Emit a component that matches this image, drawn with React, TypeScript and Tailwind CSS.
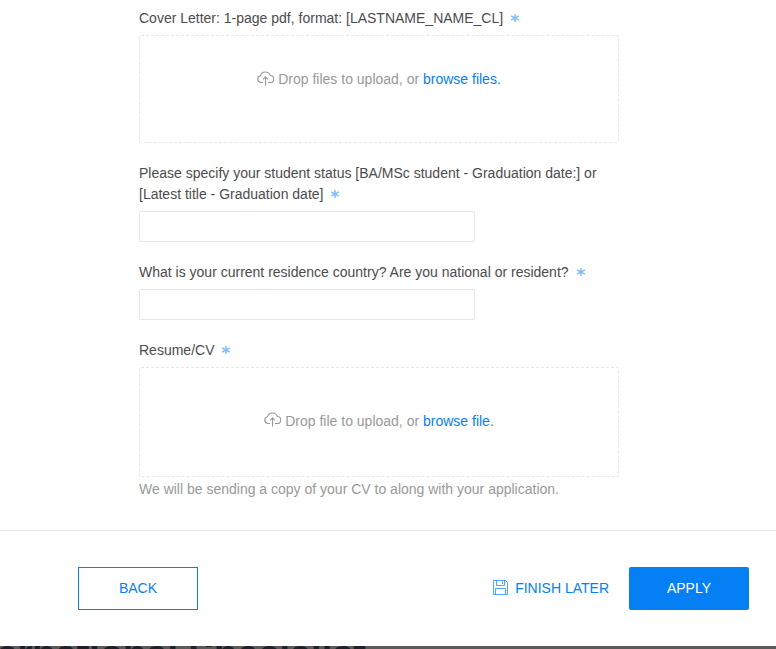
import { useState } from 'react';
import type { ReactNode } from 'react';

function UploadIcon() {
  return (
    <svg width="17" height="16" viewBox="0 0 17 16" fill="none" stroke="#999999" strokeWidth="1.1" className="mr-1 mb-1 shrink-0">
      <path d="M6 12.5H4A3.4 3.4 0 0 1 3.4 5.8A5.2 5.2 0 0 1 13.3 5.5A3.5 3.5 0 0 1 13.2 12.5H11" />
      <path d="M8.5 15.5V7M6 9.3L8.5 6.8L11 9.3" />
    </svg>
  );
}

function SaveIcon() {
  return (
    <svg width="15" height="15" viewBox="0 0 15 15" fill="none" stroke="#0580f4" strokeWidth="0.7" className="mr-[7px]">
      <path d="M0.5 0.5H12.5L14.5 2.5V14.5H0.5Z" />
      <path d="M3.5 0.5V5.5H11.5V0.5M9.5 1.5V4" />
      <path d="M2.5 14.5V8.5H12.5V14.5" />
    </svg>
  );
}

function Label({ children }: { children: ReactNode }) {
  return (
    <label className="block text-sm leading-[21px] text-[#4c4c4c]">
      {children}
      <svg width="8" height="9" viewBox="0 0 8 9" stroke="#82bffa" strokeWidth="1.5" className="ml-2 inline-block align-[0px]">
        <path d="M4 0V8M0.2 1.9L7.8 6.1M7.8 1.9L0.2 6.1" />
      </svg>
    </label>
  );
}

export default function App() {
  const [status, setStatus] = useState('');
  const [country, setCountry] = useState('');

  return (
    <div className="h-[649px] overflow-hidden bg-white font-['Liberation_Sans',Arial,sans-serif] text-sm">
      {/* Form */}
      <div className="h-[531px] border-b border-[#e9e9e9] pt-2 pl-[139px]">
        <div className="w-[480px]">
          <Label>Cover Letter: 1-page pdf, format: [LASTNAME_NAME_CL]</Label>
          <div className="mt-1.5 flex h-[108px] justify-center rounded-xs border border-dashed border-[#e6e6e6] pt-[33px] leading-[21px] text-[#999999]">
            <div className="flex h-[21px] items-center">
              <UploadIcon />
              <span>
                Drop files to upload, or <a className="text-[#0580f4]">browse files.</a>
              </span>
            </div>
          </div>

          <div className="mt-5">
            <Label>Please specify your student status [BA/MSc student - Graduation date:] or [Latest title - Graduation date]</Label>
            <input
              value={status}
              onChange={(e) => setStatus(e.target.value)}
              className="mt-1.5 block h-[31px] w-[336px] rounded-xs border border-[#e6e6e6] px-2 outline-none"
            />
          </div>

          <div className="mt-5">
            <Label>What is your current residence country? Are you national or resident?</Label>
            <input
              value={country}
              onChange={(e) => setCountry(e.target.value)}
              className="mt-1.5 block h-[31px] w-[336px] rounded-xs border border-[#e6e6e6] px-2 outline-none"
            />
          </div>

          <div className="mt-5">
            <Label>Resume/CV</Label>
            <div className="mt-1.5 flex h-[110px] items-center justify-center rounded-xs border border-dashed border-[#e6e6e6] pb-0.5 leading-[21px] text-[#999999]">
              <UploadIcon />
              <span>
                Drop file to upload, or <a className="text-[#0580f4]">browse file.</a>
              </span>
            </div>
            <p className="mt-0.5 leading-[21px] text-[#999999]">We will be sending a copy of your CV to along with your application.</p>
          </div>
        </div>
      </div>

      {/* Footer buttons */}
      <div className="flex h-[115px] items-center pr-[27px] pl-[78px]">
        <button className="h-[43px] w-[120px] border border-[#0580f4] pb-0.5 text-[#0580f4]">BACK</button>
        <button className="mr-5 ml-auto flex items-center pb-0.5 text-[#0580f4]">
          <SaveIcon />
          FINISH LATER
        </button>
        <button className="h-[43px] w-[120px] rounded-xs bg-[#0580f4] pb-0.5 text-white">APPLY</button>
      </div>

      {/* Dimmed page title behind the dialog */}
      <div className="h-[3px] overflow-hidden bg-[#5a5a5a]">
        <div className="-mt-[11px] -ml-[50px] text-[38px] leading-[38px] font-bold whitespace-nowrap text-[#20202a]">International Specialist</div>
      </div>
    </div>
  );
}
